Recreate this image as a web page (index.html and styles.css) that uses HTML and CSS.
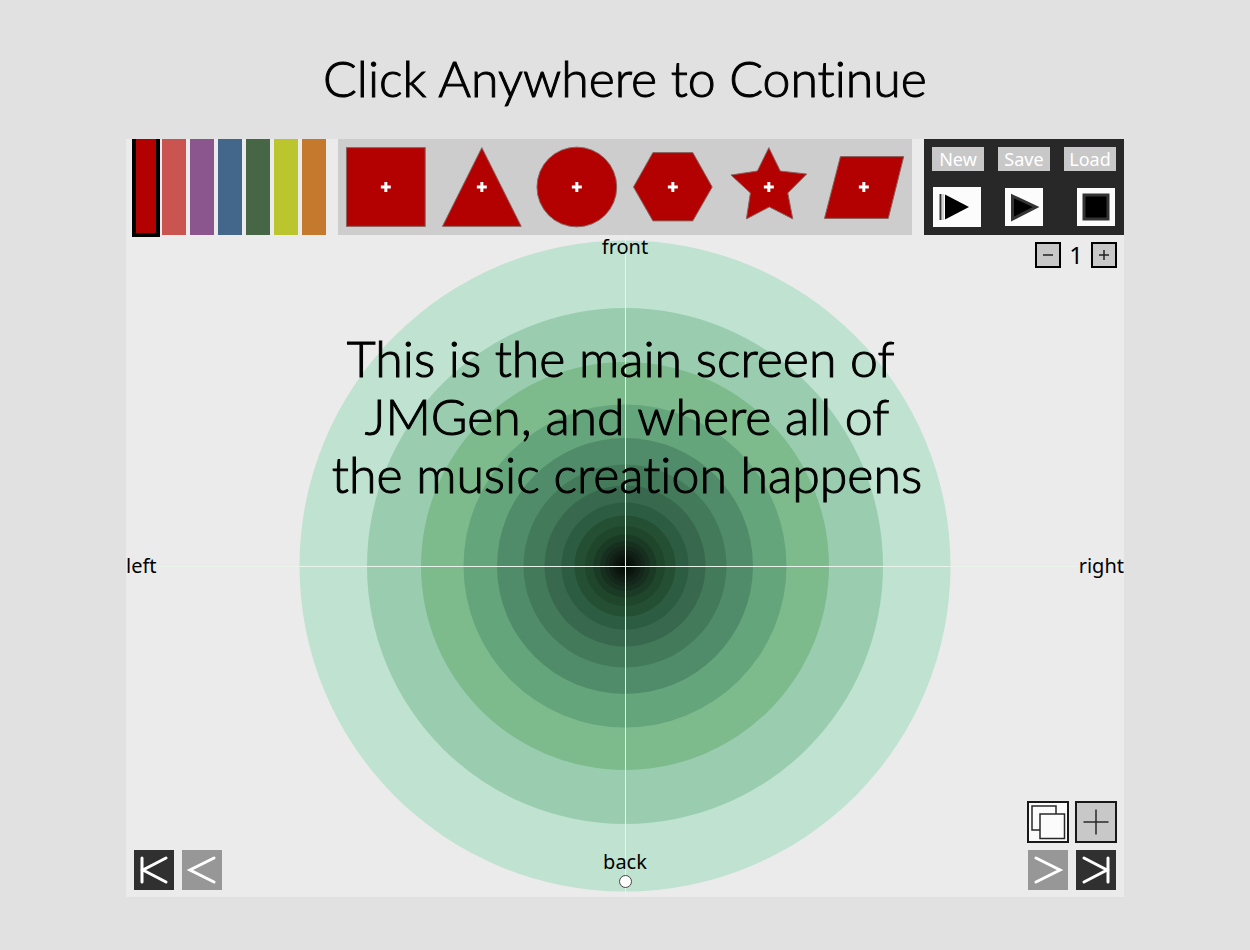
FILE: index.html
```
<!DOCTYPE html>
<html lang="en">
<head>
<meta charset="utf-8">
<title>JMGen</title>
<link rel="stylesheet" href="styles.css">
</head>
<body>
<h1 class="title">Click Anywhere to Continue</h1>
<main class="app">
  <div class="toolbar">
    <div class="palette">
      <button class="swatch swatch-red selected" aria-label="Red"></button>
      <button class="swatch swatch-coral" aria-label="Coral"></button>
      <button class="swatch swatch-purple" aria-label="Purple"></button>
      <button class="swatch swatch-blue" aria-label="Blue"></button>
      <button class="swatch swatch-green" aria-label="Green"></button>
      <button class="swatch swatch-lime" aria-label="Lime"></button>
      <button class="swatch swatch-orange" aria-label="Orange"></button>
    </div>
    <div class="shapes">
      <button class="shape" aria-label="Square"><svg viewBox="0 0 96 96"><rect x="8.5" y="8.5" width="79" height="79"/><path class="cross" d="M43 48h10M48 43v10"/></svg></button>
      <button class="shape" aria-label="Triangle"><svg viewBox="0 0 96 96"><path d="M48 8.5L87.500 87.500H8.500Z"/><path class="cross" d="M43 48h10M48 43v10"/></svg></button>
      <button class="shape" aria-label="Circle"><svg viewBox="0 0 96 96"><circle cx="48" cy="48" r="40"/><path class="cross" d="M43 48h10M48 43v10"/></svg></button>
      <button class="shape" aria-label="Hexagon"><svg viewBox="0 0 96 96"><path d="M8.500 48L28 13.500H68L87.500 48L68 82H28Z"/><path class="cross" d="M43 48h10M48 43v10"/></svg></button>
      <button class="shape" aria-label="Star"><svg viewBox="0 0 96 96"><path d="M48 8.500L59.500 32L86 35L67 54L72 80L48.500 68L25.500 80L29.500 54L10 36L36.500 32Z"/><path class="cross" d="M43 48h10M48 43v10"/></svg></button>
      <button class="shape" aria-label="Parallelogram"><svg viewBox="0 0 96 96"><path d="M24.500 17.500H88L72.500 79.500H8.500Z"/><path class="cross" d="M43 48h10M48 43v10"/></svg></button>
    </div>
    <div class="transport">
      <button class="file">New</button>
      <button class="file">Save</button>
      <button class="file">Load</button>
      <button class="play play-start" aria-label="Play from start"><svg width="48" height="40" viewBox="0 0 48 40"><path d="M7.500 7v26" stroke="#333" stroke-width="2"/><path d="M10 7v26" stroke="#aaa" stroke-width="1"/><path d="M12 7.500L36 20L12 32.500Z"/></svg></button>
      <button class="play" aria-label="Play"><svg width="38" height="38" viewBox="0 0 38 38"><path d="M7.500 8L31 19L7.500 31Z" stroke="#333" stroke-width="3"/></svg></button>
      <button class="play stop" aria-label="Stop"><svg width="38" height="38" viewBox="0 0 38 38"><path d="M7 7H31V31H7Z" stroke="#333" stroke-width="3"/></svg></button>
    </div>
  </div>
  <div class="stage">
    <svg class="rings" width="652" height="652" viewBox="-326 -326 652 652" aria-hidden="true">
      <circle r="325.500" fill="#bfe2d1"/><circle r="258" fill="#9acdb0"/><circle r="204" fill="#7dbb8d"/>
      <circle r="161.500" fill="#65a57b"/><circle r="128" fill="#518c6a"/><circle r="101.500" fill="#437b5a"/>
      <circle r="80.500" fill="#38694f"/><circle r="63.500" fill="#2c5d43"/><circle r="50.500" fill="#244f32"/>
      <circle r="40" fill="#1f452b"/><circle r="31.500" fill="#1b3a25"/><circle r="25" fill="#172f1f"/>
      <circle r="20" fill="#14271a"/><circle r="16" fill="#112016"/><circle r="12.500" fill="#0e1a12"/>
      <circle r="10" fill="#0b150e"/><circle r="7" fill="#08100a"/><circle r="4" fill="#050b06"/>
    </svg>
    <span class="axis axis-x"></span>
    <span class="axis axis-y"></span>
    <span class="label front">front</span>
    <span class="label left">left</span>
    <span class="label right">right</span>
    <span class="label back">back</span>
    <span class="listener"></span>
    <p class="caption">This is the main screen of 
JMGen, and where all of
the music creation happens</p>
    <div class="counter">
      <button class="step" aria-label="Decrease"><svg width="22" height="22" viewBox="0 0 22 22"><path d="M6 11h10"/></svg></button>
      <output class="count">1</output>
      <button class="step" aria-label="Increase"><svg width="22" height="22" viewBox="0 0 22 22"><path d="M6 11h10M11 6v10"/></svg></button>
    </div>
    <div class="nav nav-left">
      <button class="tile dark" aria-label="First"><svg width="40" height="40" viewBox="0 0 40 40"><path d="M8 8v24M32 8L9 20L32 32"/></svg></button>
      <button class="tile grey" aria-label="Previous"><svg width="40" height="40" viewBox="0 0 40 40"><path d="M32 8L8 20L32 32"/></svg></button>
    </div>
    <div class="nav nav-right">
      <button class="tile framed white" aria-label="Duplicate"><svg width="42" height="42" viewBox="0 0 42 42"><path d="M5 5H29V29H5Z"/><path d="M13 13H37.500V37.500H13Z"/></svg></button>
      <button class="tile framed silver" aria-label="Add"><svg width="42" height="42" viewBox="0 0 42 42"><path d="M8.500 21h25M21 8.500v25"/></svg></button>
      <button class="tile grey" aria-label="Next"><svg width="40" height="40" viewBox="0 0 40 40"><path d="M8 8L32 20L8 32"/></svg></button>
      <button class="tile dark" aria-label="Last"><svg width="40" height="40" viewBox="0 0 40 40"><path d="M32 8v24M8 8L31 20L8 32"/></svg></button>
    </div>
  </div>
</main>
</body>
</html>
```
FILE: styles.css
```
* { box-sizing: border-box; }
body {
  margin: 0;
  min-height: 100vh;
  padding: 49px 126px 53px;
  display: flex;
  flex-direction: column;
  background: #e1e1e1;
  color: #000;
  font-family: "Noto Sans", sans-serif;
}
button {
  margin: 0;
  padding: 0;
  border: 0;
  border-radius: 0;
  font: inherit;
  cursor: pointer;
}
svg { display: block; }
.title, .caption {
  font: 300 50px/58px Lato, sans-serif;
  font-variant-ligatures: none;
  -webkit-text-stroke: 1px #000;
  text-align: center;
}
.title { margin: 0 0 32px; }
.app {
  flex: 1;
  display: flex;
  flex-direction: column;
  background: #ebebeb;
}
.toolbar { display: flex; gap: 12px; height: 96px; }
.palette { display: flex; gap: 4px; padding-left: 8px; }
.swatch { width: 24px; }
.swatch-red { background: #b30000; }
.swatch-coral { background: #c95450; }
.swatch-purple { background: #8b568e; }
.swatch-blue { background: #43678b; }
.swatch-green { background: #466645; }
.swatch-lime { background: #bbc52e; }
.swatch-orange { background: #c5792d; }
.selected {
  width: 28px;
  height: 98px;
  margin: 0 -2px;
  border: solid #000;
  border-width: 0 4px 4px;
}
.shapes { flex: 1; min-width: 0; display: flex; background: #cdcdcd; }
.shape { flex: 1; min-width: 0; background: none; }
.shape svg { width: 100%; height: 96px; fill: #b30000; stroke: #86645f; }
.shape .cross { stroke: #fff; stroke-width: 3; }
.transport {
  flex: none;
  width: 200px;
  padding: 8px;
  display: grid;
  grid-template-columns: repeat(3, 52px);
  justify-content: space-between;
  align-content: space-between;
  align-items: center;
  justify-items: center;
  background: #282828;
}
.file {
  width: 52px;
  height: 24px;
  background: #c8c8c8;
  color: #fff;
  font-size: 18px;
  line-height: 24px;
}
.play { background: #fcfcfc; }
.play-start { justify-self: start; margin-left: 1px; }
.stop { justify-self: end; margin-right: 1px; }
.stage { position: relative; flex: 1; min-height: 652px; }
.rings { position: absolute; top: 50%; left: 50%; transform: translate(-50%, -50%); }
.axis { position: absolute; background: #e8f3ea; }
.axis-x { top: 50%; left: 0; width: 100%; height: 1px; }
.axis-y { top: 0; left: 50%; width: 1px; height: 100%; }
.label { position: absolute; font-size: 20px; line-height: 24px; }
.front, .back { left: 0; right: 0; text-align: center; }
.front { top: 0; }
.back { bottom: 23px; }
.left, .right { top: 50%; margin-top: -12px; background: #ebebeb; }
.left { left: 0; }
.right { right: 0; }
.listener {
  position: absolute;
  left: 50%;
  bottom: 9px;
  width: 13px;
  height: 13px;
  margin-left: -6px;
  border: 1px solid #444;
  border-radius: 50%;
  background: #fff;
}
.caption {
  position: absolute;
  top: 94px;
  left: 4px;
  right: 0;
  margin: 0;
  white-space: pre;
}
.counter {
  position: absolute;
  top: 7px;
  right: 7px;
  display: flex;
  align-items: center;
}
.step {
  border: 2px solid #000;
  background: #c8c8c8;
}
.step svg { fill: none; stroke: #222; stroke-width: 1.5; }
.count { width: 30px; font-size: 24px; line-height: 26px; text-align: center; }
.nav { position: absolute; bottom: 7px; }
.nav-left { left: 8px; display: flex; gap: 8px; }
.nav-right {
  right: 7px;
  display: grid;
  grid-template-columns: 42px 42px;
  gap: 7px 6px;
  justify-items: center;
}
.tile svg { fill: none; stroke: #fff; stroke-width: 3; stroke-linecap: round; }
.dark { background: #303030; }
.grey { background: #979797; }
.framed { outline: 2px solid #181818; outline-offset: -2px; }
.framed svg { stroke: #282828; stroke-width: 1.5; stroke-linecap: butt; }
.white { background: #fbfbfb; }
.white path { fill: #fbfbfb; }
.silver { background: #c8c8c8; }
```
